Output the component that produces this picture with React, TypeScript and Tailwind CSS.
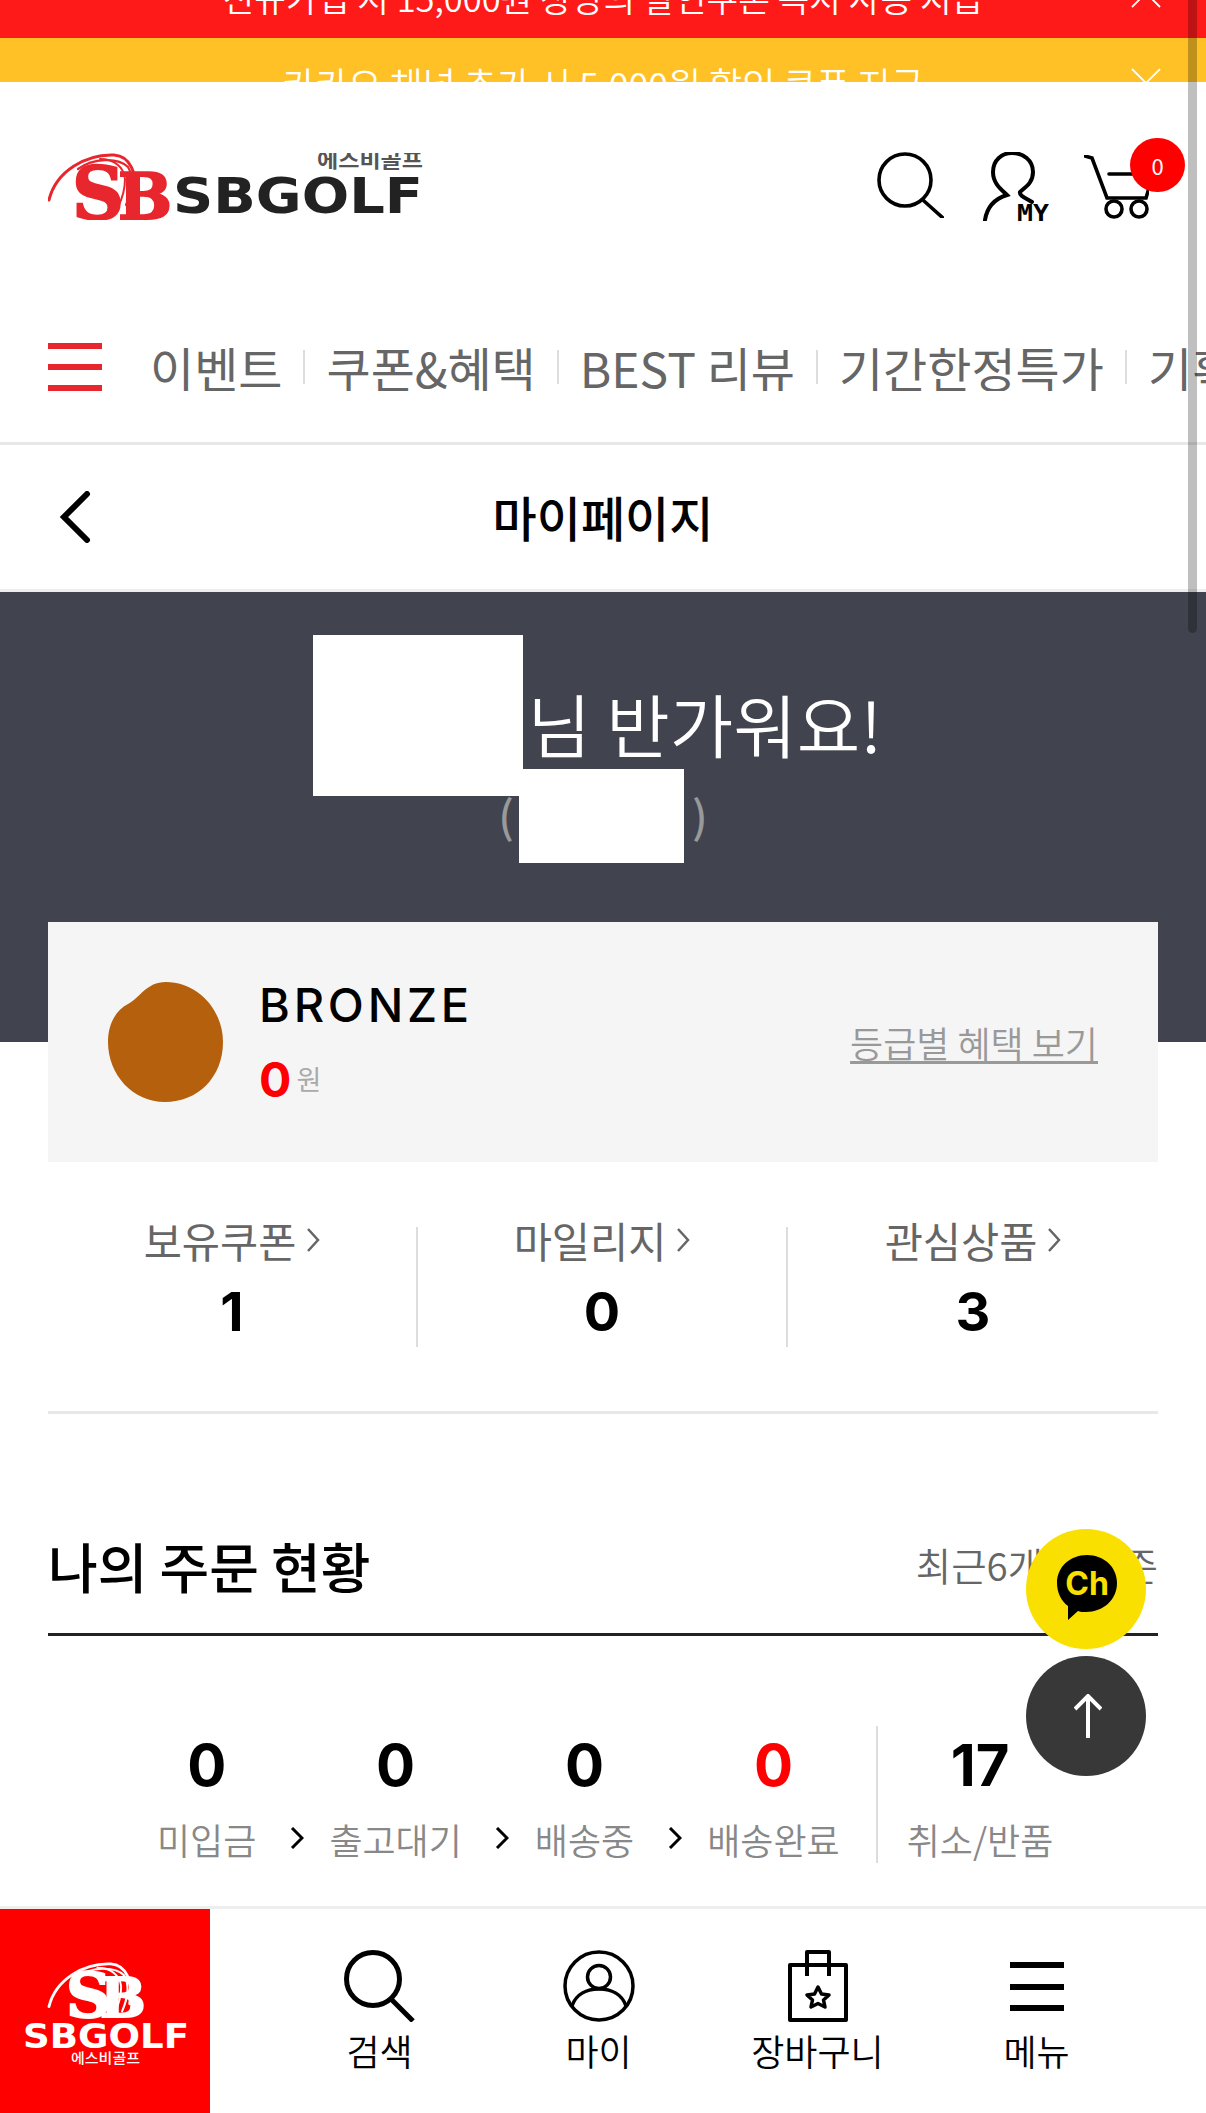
const NAV_ITEMS = ["이벤트", "쿠폰&혜택", "BEST 리뷰", "기간한정특가", "기획전"];

const STATS = [
  { label: "보유쿠폰", value: "1" },
  { label: "마일리지", value: "0" },
  { label: "관심상품", value: "3" },
];

const ORDER_STEPS = [
  { label: "미입금", value: "0" },
  { label: "출고대기", value: "0" },
  { label: "배송중", value: "0" },
  { label: "배송완료", value: "0", red: true },
];

function CloseIcon() {
  return (
    <svg width="30" height="30" viewBox="0 0 30 30" fill="none" stroke="#fff" strokeWidth="1.8">
      <path d="M1 1 L29 29 M29 1 L1 29" />
    </svg>
  );
}

function Swoosh({ color }: { color: string }) {
  return (
    <g fill="none" stroke={color} strokeLinecap="round">
      <path d="M1 47 C8 18 38 1 66 2 C82 3 90 20 86 44" strokeWidth="3" />
      <path d="M30 16 C45 5 70 4 80 14 C86 24 84 38 78 52" strokeWidth="2.2" />
      <path d="M52 6 C66 6 76 14 77 26 C77 36 74 46 70 54" strokeWidth="2" />
    </g>
  );
}

function HeaderLogo() {
  return (
    <svg width="375" height="67" viewBox="0 0 375 67">
      <Swoosh color="#e8262d" />
      <text x="24" y="66" fontFamily="'DejaVu Serif'" fontWeight="700" fontSize="72" fill="#e8262d" stroke="#e8262d" strokeWidth="2">
        S
      </text>
      <text x="70" y="66" fontFamily="'DejaVu Serif'" fontWeight="700" fontSize="64" fill="#e8262d" stroke="#e8262d" strokeWidth="2">
        B
      </text>
      <text x="125" y="60" fontFamily="'DejaVu Sans'" fontWeight="700" fontSize="50" fill="#222" textLength="250" lengthAdjust="spacingAndGlyphs">
        SBGOLF
      </text>
      <text x="269" y="15" fontFamily="'Noto Sans CJK KR'" fontWeight="700" fontSize="20" fill="#555" textLength="106" lengthAdjust="spacingAndGlyphs">
        에스비골프
      </text>
    </svg>
  );
}

function FooterLogo() {
  return (
    <svg width="210" height="204" viewBox="0 0 210 204">
      <g transform="translate(48 53) scale(0.95 0.95)">
        <Swoosh color="#fff" />
      </g>
      <text x="66" y="108" fontFamily="'DejaVu Serif'" fontWeight="700" fontSize="62" fill="#fff" stroke="#fff" strokeWidth="2">
        S
      </text>
      <text x="100" y="108" fontFamily="'DejaVu Serif'" fontWeight="700" fontSize="54" fill="#fff" stroke="#fff" strokeWidth="2">
        B
      </text>
      <text x="23" y="139" fontFamily="'DejaVu Sans'" fontWeight="700" fontSize="34" fill="#fff" textLength="166" lengthAdjust="spacingAndGlyphs">
        SBGOLF
      </text>
      <text x="71" y="154" fontFamily="'Noto Sans CJK KR'" fontWeight="500" fontSize="14" fill="#fff" textLength="69" lengthAdjust="spacingAndGlyphs">
        에스비골프
      </text>
    </svg>
  );
}

function StatChevron() {
  return (
    <svg width="14" height="24" viewBox="0 0 14 24" fill="none" stroke="#666" strokeWidth="2.5" className="ml-[10px]">
      <path d="M2 1 L12 12 L2 23" />
    </svg>
  );
}

function Header() {
  return (
    <header className="border-b-[3px] border-[#e8e8e8] bg-white pt-[71px] pb-[51px]">
      <div className="flex h-[68px] pl-[48px] items-start">
        <HeaderLogo />
        <div className="ml-auto flex items-start pr-[57px]">
          <svg width="67" height="66" viewBox="0 0 67 66" fill="none" stroke="#000" strokeWidth="3.6" strokeLinecap="round" className="-mt-px">
            <circle cx="28" cy="28" r="26" />
            <path d="M47 49 L66 66" />
          </svg>
          <svg width="67" height="69" viewBox="0 0 67 69" fill="none" stroke="#000" strokeWidth="4" strokeLinecap="round" className="ml-[38px] -mt-px">
            <path d="M3 68 C5 55 12 47 25 43 C20 38 11 32 11 20 C11 8 20 1 30 1 C41 1 51 8 51 20 C51 30 45 34 38 40 C37 44 44 46 50 50" />
            <text x="35" y="69" fontFamily="'DejaVu Sans Mono'" fontWeight="700" fontSize="23" fill="#000" stroke="none" textLength="32" lengthAdjust="spacingAndGlyphs">
              MY
            </text>
          </svg>
          <div className="relative ml-[35px] mt-[2px]">
            <svg width="65" height="65" viewBox="0 0 65 65" fill="none" stroke="#000" strokeWidth="3.6" strokeLinecap="round">
              <path d="M1 1 L8 3 L23 43 L62 43 L65 33" />
              <path d="M25 19 L50 19" />
              <circle cx="30" cy="54" r="8" />
              <circle cx="55" cy="54" r="8" />
            </svg>
            <span className="absolute left-[46px] -top-[17px] flex h-[54px] w-[55px] items-center justify-center rounded-full bg-[#ff0000] text-[22px] text-white">
              0
            </span>
          </div>
        </div>
      </div>
      <nav className="mt-[122px] flex h-[48px] items-center overflow-hidden whitespace-nowrap pl-[48px]">
        <div className="flex h-[48px] w-[54px] shrink-0 flex-col justify-between">
          <div className="h-[6px] bg-[#e8262d]" />
          <div className="h-[6px] bg-[#e8262d]" />
          <div className="h-[6px] bg-[#e8262d]" />
        </div>
        <div className="ml-[48px] flex items-center gap-[21px] text-[48px] text-[#666]">
          {NAV_ITEMS.map((item, i) => (
            <div key={item} className="flex items-center gap-[21px]">
              {i > 0 && <div className="h-[34px] w-[2px] bg-[#ddd]" />}
              <span>{item}</span>
            </div>
          ))}
        </div>
      </nav>
    </header>
  );
}

function TitleBar() {
  return (
    <div className="relative flex h-[147px] items-center justify-center border-b-[3px] border-[#eee] bg-white">
      <svg width="32" height="52" viewBox="0 0 32 52" fill="none" stroke="#000" strokeWidth="6" strokeLinecap="round" className="absolute left-[59px] top-[46px]">
        <path d="M28 3 L5 26 L28 49" />
      </svg>
      <h1 className="-mt-[2px] text-[48px] font-medium text-black">마이페이지</h1>
    </div>
  );
}

function Greeting() {
  return (
    <section className="h-[450px] bg-[#41434e] pt-[43px]">
      <div className="flex items-start justify-center pr-4">
        <div className="h-[161px] w-[210px] bg-white" />
        <span className="ml-[5px] mr-[5px] mt-[43px] w-[345px] whitespace-nowrap text-[69px] leading-[90px] text-white font-[350]">
          님 반가워요!
        </span>
      </div>
      <div className="-mt-[6px] flex justify-center text-[44px] font-medium leading-[48px] text-[#999]">
        <span>(</span>
        <div className="relative w-[178px]">
          <div className="absolute -top-[21px] left-[5px] h-[94px] w-[165px] bg-white" />
        </div>
        <span>)</span>
      </div>
    </section>
  );
}

function GradeCard() {
  return (
    <div className="relative mx-[48px] -mt-[120px] flex h-[240px] items-center bg-[#f5f5f5] px-[60px]">
      <svg width="115" height="120" viewBox="0 0 115 120" fill="#b5600c">
        <path d="M58 0 C90 0 115 28 115 60 C115 95 90 120 57 120 C25 120 0 93 0 60 C0 42 8 28 20 22 C32 16 38 0 58 0 Z" />
      </svg>
      <div className="ml-[36px]">
        <div className="font-['Inter',sans-serif] text-[47px] font-medium leading-[56px] tracking-[0.08em] text-black">BRONZE</div>
        <div className="mt-[19px] flex items-center">
          <span className="font-['Inter',sans-serif] text-[48px] leading-[56px] font-bold text-[#ff0000]">0</span>
          <span className="ml-[5px] text-[27px] text-[#aaa]">원</span>
        </div>
      </div>
      <a className="ml-auto text-[36px] text-[#999] underline underline-offset-[3px] font-[350]">등급별 혜택 보기</a>
    </div>
  );
}

function Stats() {
  return (
    <div className="mx-[48px] grid grid-cols-3 border-b-[3px] border-[#e8e8e8] pb-[64px] pt-[65px]">
      {STATS.map((stat, i) => (
        <div key={stat.label} className={`flex h-[120px] flex-col items-center ${i < 2 ? "border-r-2 border-[#ddd]" : ""}`}>
          <div className="-mt-[7px] flex h-[40px] items-center text-[41.5px] text-[#666]">
            {stat.label}
            <StatChevron />
          </div>
          <div className="mt-[22px] font-['Inter',sans-serif] text-[54px] leading-[60px] font-bold text-black">{stat.value}</div>
        </div>
      ))}
    </div>
  );
}

function OrderStatus() {
  return (
    <section className="px-[48px]">
      <div className="flex h-[222px] items-end border-b-[3px] border-[#222] pb-[35px]">
        <h2 className="text-[54px] leading-[64px] font-medium text-black">나의 주문 현황</h2>
        <span className="ml-auto mb-[9px] text-[38.5px] leading-[50px] text-[#666] font-[350]">최근6개월 기준</span>
      </div>
      <div className="mt-[90px] flex h-[137px] pl-[109px]">
        {ORDER_STEPS.map((step, i) => (
          <div key={step.label} className="flex">
            <div className="flex flex-col items-center pt-[7px]">
              <div className={`font-['Inter',sans-serif] text-[58px] leading-[64px] font-bold ${step.red ? "text-[#ff0000]" : "text-black"}`}>
                {step.value}
              </div>
              <div className="mt-[20px] whitespace-nowrap text-[36px] leading-[44px] text-[#888] font-[350]">{step.label}</div>
            </div>
            {i < 3 && (
              <div className="flex w-[73px] justify-center pl-[8px] pt-[101px]">
                <svg width="14" height="22" viewBox="0 0 14 22" fill="none" stroke="#000" strokeWidth="3">
                  <path d="M2 1 L12 11 L2 21" />
                </svg>
              </div>
            )}
          </div>
        ))}
        <div className="ml-[36px] h-[137px] w-[2px] bg-[#ddd]" />
        <div className="ml-[29px] flex flex-col items-center pt-[7px]">
          <div className="font-['Inter',sans-serif] text-[58px] leading-[64px] font-bold text-black">17</div>
          <div className="mt-[20px] whitespace-nowrap text-[36px] leading-[44px] text-[#888] font-[350]">취소/반품</div>
        </div>
      </div>
    </section>
  );
}

function BottomNav() {
  return (
    <div className="fixed bottom-0 left-0 right-0 flex h-[207px] border-t-[3px] border-[#eee] bg-white">
      <div className="w-[210px] shrink-0 bg-[#ff0000]">
        <FooterLogo />
      </div>
      <div className="grid flex-1 grid-cols-4 px-[60px] pt-[41px] text-center text-[36px] leading-[44px] text-black font-[350]">
        <div className="flex flex-col items-center">
          <svg width="72" height="72" viewBox="0 0 72 72" fill="none" stroke="#000" strokeWidth="5">
            <circle cx="29" cy="29" r="26.5" />
            <path d="M47 49 L69 71" />
          </svg>
          <span className="mt-[6px]">검색</span>
        </div>
        <div className="flex flex-col items-center">
          <svg width="72" height="72" viewBox="0 0 72 72" fill="none" stroke="#000" strokeWidth="3.5">
            <circle cx="36" cy="36" r="34" />
            <circle cx="36" cy="27" r="11.5" />
            <path d="M9 56 C13 44 24 39 36 39 C48 39 59 44 63 56" />
          </svg>
          <span className="mt-[6px]">마이</span>
        </div>
        <div className="flex flex-col items-center">
          <svg width="60" height="72" viewBox="0 0 60 72" fill="none" stroke="#000" strokeWidth="4" strokeLinejoin="round">
            <rect x="2" y="15" width="56" height="55" />
            <path d="M19 26 L19 2 L41 2 L41 26" />
            <path d="M30 37 L33.5 44 L41 45 L35.5 50 L37 57 L30 53.5 L23 57 L24.5 50 L19 45 L26.5 44 Z" strokeWidth="3.5" />
          </svg>
          <span className="mt-[6px] whitespace-nowrap">장바구니</span>
        </div>
        <div className="flex flex-col items-center">
          <svg width="54" height="72" viewBox="0 0 54 72" fill="#000">
            <rect y="12" width="54" height="6" />
            <rect y="34" width="54" height="6" />
            <rect y="55" width="54" height="6" />
          </svg>
          <span className="mt-[6px]">메뉴</span>
        </div>
      </div>
    </div>
  );
}

function FloatingButtons() {
  return (
    <div className="fixed bottom-[337px] right-[60px] flex flex-col gap-[7px]">
      <div className="h-[120px] w-[120px] rounded-full bg-[#f9e000]">
        <svg width="120" height="120" viewBox="0 0 120 120">
          <path d="M61 26 C78 26 91 38 91 54 C91 71 77 83 60 83 C57 83 54 83 52 82 L42 91 L42 77 C35 72 31 63 31 54 C31 38 44 26 61 26 Z" fill="#000" />
          <text x="61" y="66" textAnchor="middle" fontFamily="Inter" fontWeight="700" fontSize="32" fill="#f9e000">
            Ch
          </text>
        </svg>
      </div>
      <div className="flex h-[120px] w-[120px] items-center justify-center rounded-full bg-[#383838]">
        <svg width="28" height="44" viewBox="0 0 28 44" fill="none" stroke="#fff" strokeWidth="4" className="ml-[3px]">
          <path d="M14 44 L14 2 M1 15 L14 2 L27 15" />
        </svg>
      </div>
    </div>
  );
}

export default function App() {
  return (
    <div className="relative h-[2113px] overflow-hidden bg-white font-['Noto_Sans_CJK_KR','Noto_Sans',sans-serif]">
      <div className="relative flex h-[38px] justify-center overflow-hidden bg-[#ff1a1a] text-[34.5px] leading-[40px] text-white font-[350]">
        <span className="-mt-[23px] whitespace-nowrap">신규가입 시 15,000원 상당의 할인쿠폰 즉시 사용 지급</span>
        <div className="absolute right-[45px] -top-[22px]">
          <CloseIcon />
        </div>
      </div>
      <div className="relative flex h-[44px] justify-center overflow-hidden bg-[#ffc125] text-[36px] leading-[40px] text-white font-[350]">
        <span className="mt-[25px] whitespace-nowrap">카카오 채널 추가 시 5,000원 할인 쿠폰 지급</span>
        <div className="absolute right-[45px] top-[30px]">
          <CloseIcon />
        </div>
      </div>
      <Header />
      <TitleBar />
      <Greeting />
      <GradeCard />
      <Stats />
      <OrderStatus />
      <FloatingButtons />
      <BottomNav />
      <div className="fixed right-[9px] top-0 h-[633px] w-[9px] rounded-b-full bg-black/25" />
    </div>
  );
}
